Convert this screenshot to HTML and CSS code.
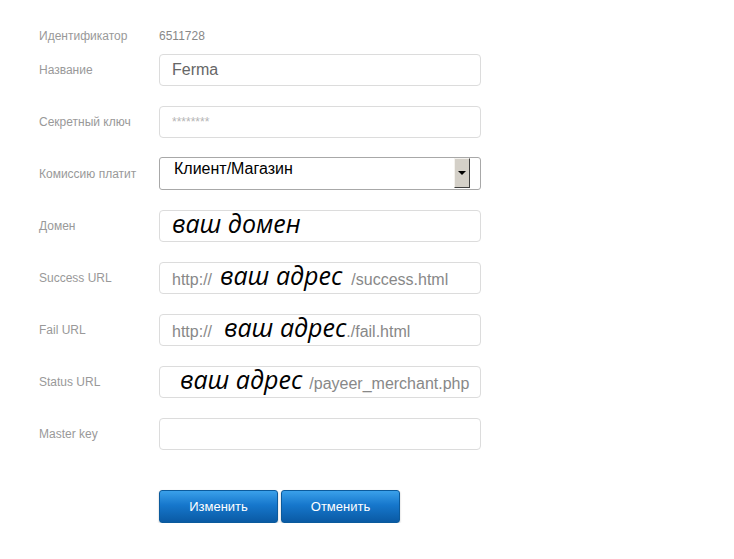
FILE: index.html
```html
<!DOCTYPE html>
<html lang="ru">
<head>
    <meta charset="UTF-8">
    <title>Настройки магазина</title>
    <link rel="stylesheet" href="styles.css">
</head>
<body>
    <!-- Форма магазина -->
    <form class="shop-form">
        <div class="row row-id">
            <span class="label">Идентификатор</span>
            <span class="value">6511728</span>
        </div>
        <div class="row">
            <label class="label">Название</label>
            <input class="field" type="text" value="Ferma">
        </div>
        <div class="row row-pre">
            <label class="label">Секретный ключ</label>
            <input class="field field-pass" type="text" placeholder="********">
        </div>
        <div class="row">
            <label class="label">Комиссию платит</label>
            <div class="select">
                <span>Клиент/Магазин</span>
                <span class="select-arrow"></span>
            </div>
        </div>
        <div class="row">
            <label class="label">Домен</label>
            <div class="field">
                <span class="note">ваш домен</span>
            </div>
        </div>
        <div class="row">
            <label class="label">Success URL</label>
            <div class="field">
                <span>http://</span><span class="note n-succ">ваш адрес</span><span class="tail t-succ">/success.html</span>
            </div>
        </div>
        <div class="row">
            <label class="label">Fail URL</label>
            <div class="field">
                <span>http://</span><span class="note n-fail">ваш адрес</span><span class="tail t-fail">./fail.html</span>
            </div>
        </div>
        <div class="row">
            <label class="label">Status URL</label>
            <div class="field">
                <span class="note n-stat">ваш адрес</span><span class="tail t-stat">/payeer_merchant.php</span>
            </div>
        </div>
        <div class="row">
            <label class="label">Master key</label>
            <input class="field" type="text">
        </div>
        <div class="actions">
            <button type="button" class="btn">Изменить</button>
            <button type="button" class="btn">Отменить</button>
        </div>
    </form>
</body>
</html>
```

FILE: styles.css
```css
body {
    margin: 0;
    background: #fff;
    font-family: "Liberation Sans", Arial, sans-serif;
}
.shop-form {
    padding: 28px 0 0 39px;
    width: 442px;
}
.row {
    display: grid;
    grid-template-columns: 120px 322px;
    align-items: center;
    margin-bottom: 20px;
}
.row-id {
    height: 16px;
    margin-bottom: 10px;
}
.row-pre {
    margin-bottom: 19px;
}
.label {
    font-size: 12px;
    color: #999;
}
.value {
    font-size: 12px;
    color: #888;
}
.field {
    box-sizing: border-box;
    height: 32px;
    margin: 0;
    padding: 0 12px;
    border: 1px solid #dcdcdc;
    border-radius: 4px;
    background: #fff;
    font-family: "Liberation Sans", Arial, sans-serif;
    font-size: 16px;
    line-height: 30px;
    color: #888;
    white-space: nowrap;
    outline: none;
}
input.field {
    width: 322px;
    color: #666;
}
.field-pass {
    font-size: 12px;
}
.field-pass::placeholder {
    color: #b5b5b5;
}
.select {
    box-sizing: border-box;
    height: 33px;
    display: flex;
    justify-content: space-between;
    align-items: flex-start;
    padding: 0 10px 0 14px;
    border: 1px solid #a8a8a8;
    border-radius: 3px;
    font-size: 16px;
    line-height: 22px;
    color: #000;
}
.select-arrow {
    box-sizing: border-box;
    position: relative;
    width: 16px;
    height: 30px;
    background: #d4d0c8;
    border: 1px solid;
    border-color: #f4f2ee #404040 #404040 #f4f2ee;
}
.select-arrow::after {
    content: "";
    position: absolute;
    left: 3px;
    top: 12px;
    border-left: 4px solid transparent;
    border-right: 4px solid transparent;
    border-top: 4px solid #000;
}
.note {
    font-family: "Open Sans", "DejaVu Sans", sans-serif;
    font-style: italic;
    font-size: 25px;
    line-height: 1;
    color: #000;
}
.n-succ { margin-left: 8px; }
.n-fail { margin-left: 12px; }
.n-stat { margin-left: 8px; }
.t-succ { margin-left: 9px; }
.t-fail { margin-left: 0; }
.t-stat { margin-left: 7px; }
.actions {
    display: flex;
    gap: 3px;
    margin: 40px 0 0 120px;
}
.btn {
    box-sizing: border-box;
    width: 119px;
    height: 33px;
    border: 1px solid #0b5a9c;
    border-radius: 3px;
    background: linear-gradient(#3aa0ea, #1677cc 45%, #0a5aa4);
    box-shadow: 0 1px 2px rgba(0, 0, 0, 0.25);
    color: #fff;
    font-family: "Liberation Sans", Arial, sans-serif;
    font-size: 13px;
    cursor: pointer;
}
```
